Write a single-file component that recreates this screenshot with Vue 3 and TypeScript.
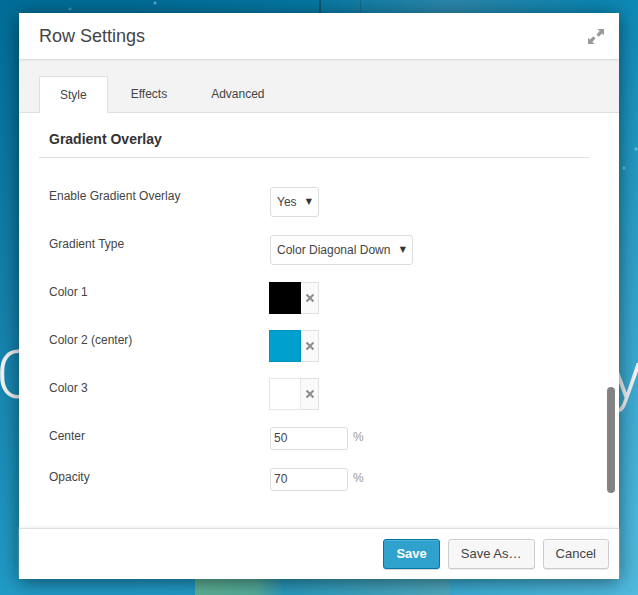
<script setup lang="ts">
import { ref } from 'vue'

const tabs = ['Style', 'Effects', 'Advanced']
const activeTab = ref('Style')
const enabled = ref('Yes')
const gradientType = ref('Color Diagonal Down')
const center = ref('50')
const opacity = ref('70')
const colors = ref([
  { id: 'color-1', label: 'Color 1', value: '#000000', edge: '#000000' },
  { id: 'color-2', label: 'Color 2 (center)', value: '#00a0ce', edge: '#0092bc' },
  { id: 'color-3', label: 'Color 3', value: '#ffffff', edge: '#e6e6e6' },
])

function clearColor(index: number): void {
  colors.value[index].value = '#ffffff'
  colors.value[index].edge = '#e6e6e6'
}
</script>

<template>
  <div class="stage">
    <div class="hero" aria-hidden="true"><span>C</span><span>y</span></div>
    <form class="dialog" role="dialog" aria-labelledby="dialog-title" @submit.prevent>
      <header class="head">
        <h1 id="dialog-title">Row Settings</h1>
        <button type="button" class="expand" aria-label="Expand">
          <svg width="18" height="18" viewBox="0 0 18 18" fill="#999">
            <path d="M10.500 2H17v6l-2-1.500-3.300 3.200-2.200-2.200L12.700 4z" />
            <path d="M7.500 17H1v-6l2 1.500 3.300-3.200 2.200 2.200L5.300 15z" />
          </svg>
        </button>
      </header>

      <nav class="tabs" role="tablist">
        <button
          v-for="tab in tabs"
          :key="tab"
          type="button"
          role="tab"
          class="tab"
          :class="{ active: tab === activeTab }"
          :aria-selected="tab === activeTab"
          @click="activeTab = tab"
        >{{ tab }}</button>
      </nav>

      <main class="body">
        <h2>Gradient Overlay</h2>
        <div class="fields">
          <div class="row">
            <label for="enabled">Enable Gradient Overlay</label>
            <span class="select">
              <select id="enabled" v-model="enabled">
                <option>Yes</option>
              </select>
              <span class="arrow" aria-hidden="true">▼</span>
            </span>
          </div>
          <div class="row">
            <label for="gradient-type">Gradient Type</label>
            <span class="select">
              <select id="gradient-type" v-model="gradientType">
                <option>Color Diagonal Down</option>
              </select>
              <span class="arrow" aria-hidden="true">▼</span>
            </span>
          </div>
          <div v-for="(color, index) in colors" :key="color.id" class="row">
            <label :for="color.id">{{ color.label }}</label>
            <span class="color">
              <button
                :id="color.id"
                type="button"
                class="swatch"
                :style="{ backgroundColor: color.value, borderColor: color.edge }"
              ></button>
              <button type="button" class="clear" :aria-label="`Clear ${color.label}`" @click="clearColor(index)">
                <svg width="10" height="10" viewBox="0 0 10 10" fill="none" stroke="#8c8c8c" stroke-width="2">
                  <path d="M1.500 1.500l7 7M8.500 1.500l-7 7" />
                </svg>
              </button>
            </span>
          </div>
          <div class="row">
            <label for="center">Center</label>
            <span class="number"><input id="center" v-model="center" type="text" />%</span>
          </div>
          <div class="row">
            <label for="opacity">Opacity</label>
            <span class="number"><input id="opacity" v-model="opacity" type="text" />%</span>
          </div>
        </div>
        <div class="thumb"></div>
      </main>

      <footer class="foot">
        <button type="submit" class="btn primary">Save</button>
        <button type="button" class="btn">Save As…</button>
        <button type="button" class="btn">Cancel</button>
      </footer>
    </form>
  </div>
</template>

<style>
body {
  margin: 0;
}
</style>

<style scoped>
* {
  box-sizing: border-box;
}
.stage {
  position: relative;
  display: flex;
  min-height: 100vh;
  padding: 13px 19px 16px;
  overflow: hidden;
  font: 12px/20px "Liberation Sans", Arial, sans-serif;
  color: #444;
  background:
    radial-gradient(circle at 155px 3px, #58a6c3 0 1px, transparent 2px),
    radial-gradient(circle at 70px 9px, #3c91b0 0 1px, transparent 2px),
    radial-gradient(circle at 624px 168px, #69bdda 0 1px, transparent 2px),
    radial-gradient(circle at 636px 149px, #69bdda 0 1px, transparent 2px),
    linear-gradient(#0f566f, #0f566f) 319px 0 / 2px 13px no-repeat,
    linear-gradient(#1b6a8a, #1b6a8a) 360px 0 / 1px 13px no-repeat,
    linear-gradient(90deg, #6db98bcc, #62b08fcc 24%, #2b8fa866 35%, #62a9ae88) 195px 100% / 255px 24px no-repeat,
    linear-gradient(90deg, transparent, #4a8eac88 50%, transparent) 310px 0 / 280px 13px no-repeat,
    linear-gradient(125deg, transparent 60%, #7ccdea88),
    linear-gradient(90deg, transparent 20%, #22b2e066),
    linear-gradient(#006d98, #1480aa 50%, #219bc7);
}
.hero {
  position: absolute;
  inset: 0;
  display: flex;
  justify-content: space-between;
  align-items: center;
  padding-top: 156px;
  font: 300 66px/80px Roboto, sans-serif;
  color: #f4f4f4;
}
.hero span {
  margin: 0 -4px;
}
.dialog {
  position: relative;
  flex: 1;
  min-width: 0;
  display: flex;
  flex-direction: column;
  background: #fff;
  box-shadow: 0 3px 18px rgba(0, 0, 0, 0.5);
}
.head {
  display: flex;
  justify-content: space-between;
  align-items: center;
  height: 47px;
  padding: 0 14px 0 20px;
  border-bottom: 1px solid #dfdfdf;
}
h1 {
  margin: 0;
  font-size: 18px;
  font-weight: 400;
  line-height: 24px;
}
button {
  font: inherit;
  color: inherit;
  cursor: pointer;
}
.expand {
  display: flex;
  padding: 0;
  border: 0;
  background: none;
}
.tabs {
  display: flex;
  gap: 2px;
  height: 53px;
  padding: 16px 20px 0;
  background: #f3f3f3;
  border-bottom: 1px solid #dfdfdf;
  box-shadow: inset 0 2px 2px -1px #e8e8e8;
}
.tab {
  height: 35px;
  padding: 0 20px;
  border: 1px solid transparent;
  border-bottom: 0;
  background: none;
}
.tab.active {
  height: 37px;
  border-color: #dfdfdf;
  background: #fff;
}
.body {
  position: relative;
  flex: 1;
  padding: 16px 30px 35px 20px;
}
h2 {
  margin: 0 0 28px;
  padding: 0 10px 8px;
  border-bottom: 1px solid #dfdfdf;
  font-size: 14px;
  line-height: 20px;
  color: #333;
}
.fields {
  display: grid;
  gap: 16px;
  padding: 0 10px;
}
.row {
  display: grid;
  grid-template-columns: 220px 1fr;
  align-items: start;
}
.select {
  position: relative;
  justify-self: start;
  display: flex;
  margin: 1px;
}
select {
  appearance: none;
  height: 30px;
  padding: 0 21px 0 6px;
  border: 1px solid #ddd;
  border-radius: 3px;
  background: #fff;
  font: inherit;
  color: inherit;
}
.arrow {
  position: absolute;
  right: 7px;
  top: 5px;
  font-family: "DejaVu Sans", sans-serif;
  font-size: 8px;
  color: #333;
  pointer-events: none;
}
.color {
  display: flex;
}
.swatch {
  width: 32px;
  height: 32px;
  padding: 0;
  border: 1px solid;
}
.clear {
  display: grid;
  place-items: center;
  width: 18px;
  height: 32px;
  padding: 0;
  border: 1px solid #e2e2e2;
  border-left: 0;
  background: #fafafa;
}
.number {
  display: flex;
  gap: 5px;
  margin: 1px;
  color: #999;
}
input {
  width: 78px;
  height: 23px;
  padding: 0 3px 2px;
  border: 1px solid #ddd;
  border-radius: 3px;
  background: #fff;
  font: inherit;
  color: #444;
}
.thumb {
  position: absolute;
  right: 4px;
  bottom: 35px;
  width: 8px;
  height: 106px;
  border-radius: 4px;
  background: #828282;
}
.foot {
  display: flex;
  justify-content: flex-end;
  gap: 8px;
  padding: 10px;
  border-top: 1px solid #dfdfdf;
  box-shadow: 0 -2px 3px -1px #eee;
}
.btn {
  height: 30px;
  padding: 0 12px;
  border: 1px solid #ccc;
  border-radius: 3px;
  background: #f7f7f7;
  box-shadow: inset 0 1px 0 #fff, 0 1px 0 rgba(0, 0, 0, 0.08);
  font-size: 13px;
}
.btn.primary {
  border-color: #0074a2;
  background: #2ea2cc;
  box-shadow: inset 0 1px 0 rgba(120, 200, 230, 0.5), 0 1px 0 rgba(0, 0, 0, 0.15);
  font-weight: 700;
  color: #fff;
}
</style>
